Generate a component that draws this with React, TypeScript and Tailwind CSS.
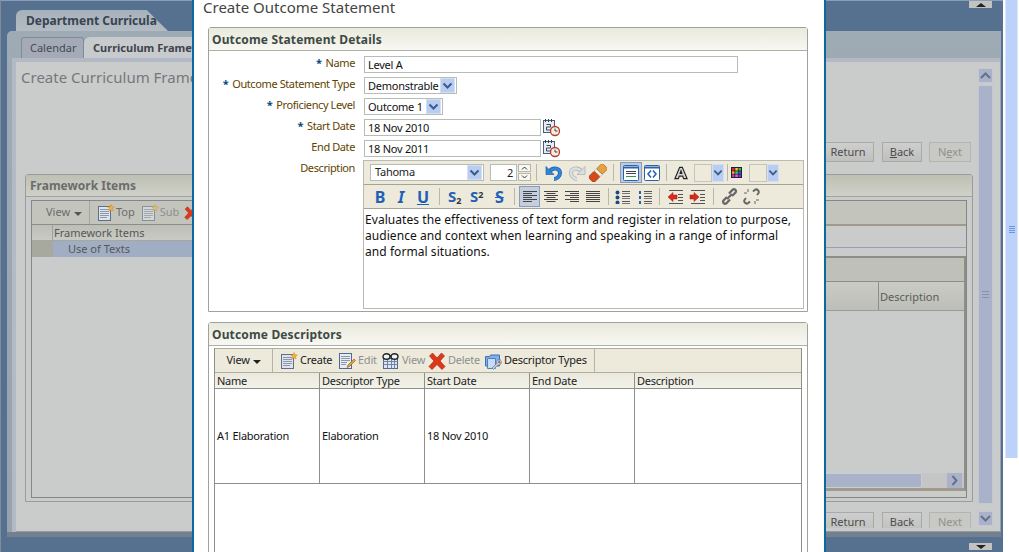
import React from 'react'

const font = "font-['Noto_Sans',sans-serif]"

function PageIcon({ dim = false }: { dim?: boolean }) {
  return (
    <svg width="18" height="18" viewBox="0 0 18 18" className={`shrink-0 ${dim ? 'opacity-60' : ''}`}>
      <rect x="1.500" y="2.500" width="12" height="14" fill="#dfe4ec" stroke="#5d6f8c" />
      <path d="M3 5.500h9M3 7.500h9M3 9.500h9M3 11.500h9M3 13.500h7" stroke="#8a97ad" />
      <path d="M14 0.500l1 2.200 2.400.3-1.800 1.600.5 2.400-2.100-1.200-2.100 1.200.5-2.400-1.800-1.600 2.400-.3z" fill="#f2b33d" stroke="#d0882a" strokeWidth=".5" />
    </svg>
  )
}

function EditIcon() {
  return (
    <svg width="18" height="18" viewBox="0 0 18 18" className="shrink-0">
      <rect x="1.500" y="1.500" width="12" height="15" fill="#e8edf4" stroke="#4f6a93" />
      <path d="M3 4.500h9M3 6.500h9M3 8.500h9M3 10.500h6M3 12.500h5" stroke="#8a97ad" />
      <path d="M16 7l1.500 1.500-6 6-2.500 1 1-2.500z" fill="#e3a03a" stroke="#8a5a22" strokeWidth=".6" />
    </svg>
  )
}

function GlassesIcon() {
  return (
    <svg width="19" height="18" viewBox="0 0 19 18" className="shrink-0">
      <rect x="2.500" y="6.500" width="14" height="10" fill="#dfe6f1" stroke="#516a92" />
      <path d="M2.500 9.500h14M2.500 12.500h14M6.500 6.500v10M10.500 6.500v10M13.500 6.500v10" stroke="#6f86ab" />
      <ellipse cx="5.500" cy="4.500" rx="3.500" ry="2.800" fill="#eef3fa" stroke="#222" strokeWidth="1.400" />
      <ellipse cx="13.500" cy="4.500" rx="3.500" ry="2.800" fill="#eef3fa" stroke="#222" strokeWidth="1.400" />
      <path d="M8.500 4h2" stroke="#222" strokeWidth="1.400" />
    </svg>
  )
}

function XIcon({ size = 18 }: { size?: number }) {
  return (
    <svg width={size} height={size} viewBox="0 0 18 18" className="shrink-0">
      <path d="M1.500 4L4.500 1 9 6l4.500-5 3 3L12 9l5 5.500-3 3L9 12.500l-5 5-3-3L6 9z" fill="#e0361a" stroke="#a12a12" strokeWidth=".7" />
    </svg>
  )
}

function TypesIcon() {
  return (
    <svg width="18" height="18" viewBox="0 0 18 18" className="shrink-0">
      <path d="M1.500 4.500h4l1-1.500h9v11h-14z" fill="#7fb0e8" stroke="#3f6fb0" />
      <path d="M3.500 6.500h8v10h-8z" fill="#c4dcf5" stroke="#4f80bd" />
      <path d="M17 8a3 3 0 0 0-4.500 3.500L8 16l1.500 1.500 4.500-4.500a3 3 0 0 0 3.500-3.500l-2 1.500-1.500-1z" fill="#c5c9cf" stroke="#66707c" strokeWidth=".6" />
    </svg>
  )
}

function CalIcon() {
  return (
    <svg width="18" height="18" viewBox="0 0 18 18">
      <rect x="0.500" y="1.500" width="11" height="12" fill="#e7ebf2" stroke="#4c5c78" />
      <path d="M2.500 0v3M5.500 0v3M8.500 0v3" stroke="#30415f" />
      <path d="M3.500 5.500h4v2.500h-4v3h4.500" fill="none" stroke="#3a4a66" />
      <circle cx="12" cy="12" r="4.500" fill="#f7ece4" stroke="#b33d28" strokeWidth="1.300" />
      <path d="M12 9.500V12h2.500" fill="none" stroke="#444" />
    </svg>
  )
}

function UndoIcon({ redo = false }: { redo?: boolean }) {
  const fill = redo ? '#dcdfe0' : '#2f86d8'
  const edge = redo ? '#a9aeb3' : '#1f5fa8'
  return (
    <svg width="18" height="18" viewBox="0 0 18 18" className={redo ? '-scale-x-100' : ''}>
      <path d="M5 7c3-4 10-3 10 2 0 3-3 6-6 6" fill="none" stroke={edge} strokeWidth="4" />
      <path d="M5 7c3-4 10-3 10 2 0 3-3 6-6 6" fill="none" stroke={fill} strokeWidth="2.600" />
      <path d="M1 2.500v8h8z" fill={fill} stroke={edge} strokeWidth=".7" />
    </svg>
  )
}

function EraserIcon() {
  return (
    <svg width="18" height="18" viewBox="0 0 18 18">
      <g transform="rotate(-45 9 9)">
        <rect x="-1" y="5" width="9" height="8" rx="1.500" fill="#d8491a" stroke="#8a3317" strokeWidth=".7" />
        <rect x="8" y="5" width="3" height="8" fill="#f4f1e8" stroke="#a69a80" strokeWidth=".5" />
        <rect x="11" y="5" width="8" height="8" rx="1.500" fill="#e9a13f" stroke="#9a6a25" strokeWidth=".7" />
      </g>
    </svg>
  )
}

function RichIcon() {
  return (
    <div className="w-[22px] h-[21px] flex items-center justify-center bg-[#bccbe0] border border-[#8b9cb8] shrink-0">
      <svg width="16" height="16" viewBox="0 0 16 16">
        <rect x="0.500" y="0.500" width="15" height="15" rx="1" fill="#fff" stroke="#2a63ad" />
        <path d="M0.500 2.500h15" stroke="#2a63ad" strokeWidth="2" />
        <path d="M3 6.500h10M3 8.500h10" stroke="#345" />
        <path d="M3 11.500h10" stroke="#2c9a4a" />
      </svg>
    </div>
  )
}

function SourceIcon() {
  return (
    <svg width="16" height="16" viewBox="0 0 16 16">
      <rect x="0.500" y="0.500" width="15" height="15" rx="1" fill="#fff" stroke="#2a63ad" />
      <path d="M0.500 2.500h15" stroke="#2a63ad" strokeWidth="2" />
      <path d="M7 5.500L4 9l3 3.500M9 5.500L12 9l-3 3.500" fill="none" stroke="#2a63ad" strokeWidth="1.600" />
    </svg>
  )
}

function Chevron() {
  return (
    <svg width="11" height="8" viewBox="0 0 11 8">
      <path d="M1.500 1.500L5.500 5.500l4-4" fill="none" stroke="#3f5a86" strokeWidth="2" />
    </svg>
  )
}

function DropBtn({ w = 'w-[15px]', h = 'h-[15px]' }: { w?: string; h?: string }) {
  return (
    <span className={`${w} ${h} flex items-center justify-center bg-[#b8cdf2] border border-[#d3dff5] shrink-0`}>
      <Chevron />
    </span>
  )
}

function Sep({ ml = 'ml-[5px]', mr = 'mr-[5px]' }: { ml?: string; mr?: string }) {
  return <span className={`w-px h-[17px] bg-[#b7b7aa] shrink-0 ${ml} ${mr}`} />
}

function AlignIcon({ kind }: { kind: 'left' | 'center' | 'right' | 'full' }) {
  const rows = [0, 1, 2, 3, 4, 5]
  return (
    <svg width="16" height="14" viewBox="0 0 16 14">
      {rows.map((r) => {
        const long = r % 2 === 0
        const w = kind === 'full' || long ? 14 : 9
        const x = kind === 'left' || kind === 'full' ? 1 : kind === 'right' ? 15 - w : 8 - w / 2
        return <rect key={r} x={x} y={1 + r * 2} width={w} height="1" fill="#444" />
      })}
    </svg>
  )
}

function ListIcon({ numbered = false }: { numbered?: boolean }) {
  return (
    <svg width="16" height="14" viewBox="0 0 16 14" className="shrink-0">
      {[1, 6, 11].map((y) => (
        <g key={y}>
          {numbered ? (
            <rect x="2" y={y} width="2" height="3" fill="#2b5ea8" />
          ) : (
            <circle cx="2.500" cy={y + 1.500} r="2" fill="#23487e" />
          )}
          <rect x="7" y={y} width="8" height="1" fill="#555" />
          <rect x="7" y={y + 2} width="8" height="1" fill="#777" />
        </g>
      ))}
    </svg>
  )
}

function IndentIcon({ out = false }: { out?: boolean }) {
  return (
    <svg width="17" height="14" viewBox="0 0 17 14" className="shrink-0">
      <rect x="2" y="0" width="14" height="1" fill="#555" />
      <rect x="2" y="13" width="14" height="1" fill="#555" />
      {[3, 6, 9].map((y) => (
        <rect key={y} x="11" y={y + 1} width="5" height="1" fill="#555" />
      ))}
      <path
        d={out ? 'M1 7l5-4.500V5h4v4H6v2.500z' : 'M10 7L5 2.500V5H1v4h4v2.500z'}
        fill="#e0281a"
        stroke="#8c1f14"
        strokeWidth=".5"
      />
    </svg>
  )
}

function LinkIcon({ broken = false }: { broken?: boolean }) {
  return (
    <svg width="17" height="17" viewBox="0 0 17 17" className="shrink-0">
      {broken ? (
        <g fill="none" stroke="#666" strokeWidth="2">
          <path d="M3 10L1.800 11.500a2.500 2.500 0 0 0 3.500 3.500L7 13.500" />
          <path d="M14 7l1.200-1.500a2.500 2.500 0 0 0-3.500-3.500L10 3.500" />
          <path d="M5 1v3M1 5h3M12 16v-3M16 12h-3" strokeWidth="1" />
        </g>
      ) : (
        <g fill="none" stroke="#666" strokeWidth="2.200">
          <path d="M6 9l-3.500 3.500a2 2 0 0 0 2.800 2.800L9 11.500" />
          <path d="M11 8l3.500-3.500a2 2 0 0 0-2.800-2.800L8 5.500" />
          <path d="M6 11l5-5" />
        </g>
      )}
    </svg>
  )
}

function PageBtn({ label, w, under, dim = false }: { label: string; w: string; under?: number; dim?: boolean }) {
  return (
    <span
      className={`${w} h-[20px] shrink-0 flex items-center justify-center text-[11px] border ${
        dim ? 'border-[#b4b4b2] text-[#8f9190] bg-[#c8c8c4]' : 'border-[#a7aaa9] text-[#4c4c4c] bg-gradient-to-b from-[#cecece] to-[#bfc0be]'
      }`}
    >
      {under === undefined ? (
        label
      ) : (
        <span>
          {label.slice(0, under)}
          <u>{label[under]}</u>
          {label.slice(under + 1)}
        </span>
      )}
    </span>
  )
}

function PageBtns({ keys = true }: { keys?: boolean }) {
  return (
    <div className="flex">
      <PageBtn label="Return" w="w-[52px]" />
      <span className="w-[8px]" />
      <PageBtn label="Back" w="w-[40px]" under={keys ? 0 : undefined} />
      <span className="w-[7px]" />
      <PageBtn label="Next" w="w-[42px]" under={keys ? 1 : undefined} dim />
    </div>
  )
}

function SmallArrowBtn({ up = false }: { up?: boolean }) {
  return (
    <span className="w-[23px] h-[7px] bg-[#c2c3c1] flex items-center justify-center">
      <span className={`border-x-[5px] border-x-transparent ${up ? 'border-b-[4px] border-b-[#222]' : 'border-t-[4px] border-t-[#222]'}`} />
    </span>
  )
}

function BgPage() {
  return (
    <div className="w-[1003px] h-full bg-[#56718f] border-l border-[#7f8d9b] flex flex-col shrink-0">
      <div className="h-[1px] bg-[#8b9fb9]" />
      <div className="h-[30px] relative pt-[9px] pl-[15px]">
        <div className="w-[152px] h-[21px] bg-gradient-to-b from-[#a6b2bb] to-[#b3bcc3] rounded-tl-[6px] [clip-path:polygon(0_0,86%_0,100%_100%,0_100%)] pl-[10px] text-[12px] leading-[22px] font-bold text-[#3a4350] whitespace-nowrap">
          Department Curricula
        </div>
        <span className="absolute right-[11px] top-0">
          <SmallArrowBtn up />
        </span>
      </div>
      <div className="h-[501px] ml-[6px] mr-[2px] flex flex-col rounded-tl-[5px] bg-gradient-to-b from-[#9eabb4] to-[#98a2af]">
        <div className="h-[27px] pl-[14px] pt-[6px] flex shrink-0">
          <div className="w-[63px] h-[21px] bg-[#a4aab6] border border-[#808a9a] border-b-0 rounded-t-[3px] text-[11px] leading-[20px] pl-[8px] text-[#454a55]">
            Calendar
          </div>
          <div className="w-[200px] h-[21px] bg-[#c7cbce] rounded-tl-[6px] pl-[9px] text-[11px] leading-[21px] font-bold text-[#3e434c] whitespace-nowrap">
            Curriculum Framework
          </div>
        </div>
        <div className="flex-1 min-h-0 ml-[5px] mr-[1px] bg-[#cacbcb] border-l-[4px] border-t-[4px] border-[#b4b9c6] flex flex-col">
          <div className="flex flex-1 min-h-0">
            <div className="flex-1 min-w-0 flex flex-col pl-[9px] pr-[5px]">
              <div className="h-[112px] flex justify-between shrink-0">
                <div className="pt-[3px] -ml-[4px] text-[15px] leading-[24px] text-[#75787b] whitespace-nowrap">Create Curriculum Framework</div>
                <div className="pt-[80px] pr-[2px]">
                  <PageBtns />
                </div>
              </div>
              <div className="h-[328px] flex flex-col border border-[#9a9c9b] rounded-t-[3px] shrink-0">
                <div className="h-[22px] bg-gradient-to-b from-[#bfc0b4] to-[#cfd0c8] border-b border-[#a0a2a0] pl-[4px] text-[12px] leading-[21px] font-bold text-[#6a6d6d] shrink-0">
                  Framework Items
                </div>
                <div className="flex-1 min-h-0 mx-[5px] mt-[3px] mb-[3px] border border-[#858785] flex flex-col">
                  <div className="h-[24px] border-b border-[#8b8d86] flex items-center text-[11px] text-[#6a6c6c] bg-[#c3c4bc] shrink-0">
                    <span className="w-[58px] pl-[14px] border-r border-[#a6a79e] h-full flex items-center gap-[4px]">
                      View <span className="border-x-[4px] border-t-[4px] border-x-transparent border-t-[#555] mt-[2px]" />
                    </span>
                    <span className="flex items-center pl-[7px] gap-[1px]"><PageIcon /> Top</span>
                    <span className="flex items-center pl-[6px] gap-[1px] text-[#8d8f8f]"><PageIcon dim /> Sub</span>
                    <span className="pl-[5px]"><XIcon size={14} /></span>
                  </div>
                  <div className="h-[16px] w-[400px] flex text-[11px] leading-[16px] text-[#55585a] bg-gradient-to-b from-[#bdbeb5] to-[#c9cac3] border-b border-[#a6a79e] shrink-0">
                    <span className="w-[21px] border-r border-[#a0a19a]" />
                    <span className="pl-[1px]">Framework Items</span>
                  </div>
                  <div className="h-[16px] w-[400px] flex text-[11px] leading-[16px] text-[#55585a] bg-[#a1adc3] shrink-0">
                    <span className="w-[21px] bg-[#a8a99e]" />
                    <span className="pl-[15px]">Use of Texts</span>
                  </div>
                  <div className="flex-1 min-h-0 flex justify-end">
                    <div className="w-[145px] mt-[-33px] h-[275px] flex flex-col shrink-0">
                      <div className="h-[2px] bg-[#a09a8c] shrink-0" />
                      <div className="h-[22px] border-b border-[#97a0ac] shrink-0" />
                      <div className="h-[235px] mt-[8px] border-2 border-[#8c8e88] border-b-[3px] border-b-[#a09a8c] flex flex-col shrink-0">
                        <div className="h-[24px] bg-[#bfc0b8] border-b border-[#8c8e88] shrink-0" />
                        <div className="h-[29px] flex justify-end bg-gradient-to-b from-[#cacbc4] to-[#bdbeb7] border-b border-[#9a9c98] shrink-0">
                          <div className="w-[86px] border-l border-[#8c8e88] pl-[1px] text-[11px] leading-[29px] text-[#595c5e]">Description</div>
                        </div>
                        <div className="flex-1" />
                        <div className="h-[15px] flex items-center justify-end bg-[#c4c5c4] shrink-0">
                          <div className="w-[100px] h-[15px] bg-[#a9b2c8] border border-[#c8ced8] rounded-r-[2px]" />
                          <div className="w-[25px]" />
                          <div className="w-[15px] h-[15px] bg-[#a9b2c8] flex items-center justify-center">
                            <svg width="7" height="11" viewBox="0 0 7 11"><path d="M1.500 1l4 4.500-4 4.500" fill="none" stroke="#667088" strokeWidth="2" /></svg>
                          </div>
                          <div className="w-[2px]" />
                        </div>
                      </div>
                    </div>
                  </div>
                </div>
              </div>
              <div className="flex-1 min-h-0 flex justify-end items-start pt-[10px] pr-[2px]">
                <div className="h-[16px] overflow-hidden">
                  <PageBtns keys={false} />
                </div>
              </div>
            </div>
            <div className="w-[15px] mr-[7px] flex flex-col pt-[6px] pb-[5px] shrink-0">
              <div className="h-[15px] bg-[#a9b2c8] border border-[#c3c9d4] flex items-center justify-center shrink-0">
                <svg width="11" height="7" viewBox="0 0 11 7"><path d="M1 6l4.500-4.500L10 6" fill="none" stroke="#667088" strokeWidth="2" /></svg>
              </div>
              <div className="flex-1 mt-[2px] mb-[7px] bg-[#a9b2c8] border border-[#c3c9d4] flex items-center justify-center rounded-[2px]">
                <div className="w-[7px] h-[7px] [background:repeating-linear-gradient(#8892a8_0_1px,transparent_1px_3px)]" />
              </div>
              <div className="h-[15px] bg-[#a9b2c8] border border-[#c3c9d4] flex items-center justify-center shrink-0">
                <svg width="11" height="7" viewBox="0 0 11 7"><path d="M1 1l4.500 4.500L10 1" fill="none" stroke="#667088" strokeWidth="2" /></svg>
              </div>
            </div>
          </div>
          <div className="h-[1px] bg-[#96989c] shrink-0" />
        </div>
      </div>
      <div className="h-[5px] ml-[6px] mr-[2px] bg-[#72808f] shrink-0" />
      <div className="flex-1 flex justify-end items-start pr-[11px] pt-[6px]">
        <SmallArrowBtn />
      </div>
    </div>
  )
}

function FormRow({ label, req = false, children }: { label: string; req?: boolean; children: React.ReactNode }) {
  return (
    <div className="flex h-[21px] items-center">
      <div className="w-[146px] text-right text-[11px] leading-[14px] tracking-[-0.4px] text-[#5f4300] whitespace-nowrap -mt-[4px]">
        {req && <span className="text-[#00487e] font-bold mr-[4px]">*</span>}
        {label}
      </div>
      <div className="ml-[9px] flex items-center">{children}</div>
    </div>
  )
}

function TextInput({ value, w }: { value: string; w: string }) {
  return (
    <div className={`${w} h-[17px] border border-[#b6bdb6] bg-white pl-[3px] text-[11px] leading-[16px] text-[#111] whitespace-nowrap`}>
      {value}
    </div>
  )
}

function SelectBox({ value, w }: { value: string; w: string }) {
  return (
    <div className={`${w} h-[17px] border border-[#b6bdb6] bg-white pl-[3px] pr-[1px] flex items-center justify-between text-[11px] text-[#111]`}>
      <span className="whitespace-nowrap mt-[1px]">{value}</span>
      <DropBtn />
    </div>
  )
}

function Editor() {
  return (
    <div className="w-[441px] h-[149px] flex flex-col border border-[#b9bab0] bg-white ml-[-1px]">
      <div className="h-[24px] bg-[#edeadb] border-b border-[#a3a396] flex items-center pl-[6px] shrink-0">
        <div className="w-[114px] h-[17px] border border-[#b6bdb6] bg-white pl-[4px] pr-[1px] flex items-center justify-between text-[11px] text-[#222] shrink-0">
          Tahoma
          <DropBtn />
        </div>
        <div className="ml-[6px] w-[27px] h-[17px] border border-[#b6bdb6] bg-white pr-[3px] text-right text-[11px] leading-[16px] text-[#222] shrink-0">2</div>
        <div className="ml-[1px] w-[13px] h-[17px] flex flex-col gap-px shrink-0">
          <span className="h-[8px] bg-[#f8f8f2] border border-[#b6b6aa] flex items-center justify-center"><svg width="7" height="4" viewBox="0 0 7 4"><path d="M1 3.500l2.500-2.500L6 3.500" fill="none" stroke="#333" /></svg></span>
          <span className="h-[8px] bg-[#f8f8f2] border border-[#b6b6aa] flex items-center justify-center"><svg width="7" height="4" viewBox="0 0 7 4"><path d="M1 .5l2.500 2.500L6 .5" fill="none" stroke="#333" /></svg></span>
        </div>
        <Sep />
        <span className="ml-[3px]"><UndoIcon /></span>
        <span className="w-[5px]" />
        <UndoIcon redo />
        <span className="w-[3px]" />
        <EraserIcon />
        <Sep ml="ml-[6px]" mr="mr-[6px]" />
        <RichIcon />
        <span className="w-[2px]" />
        <SourceIcon />
        <Sep ml="ml-[6px]" mr="mr-[7px]" />
        <svg width="14" height="14" viewBox="0 0 16 15" className="shrink-0"><path d="M1 14L6.500 1h3L15 14h-4l-1-3H6l-1 3zM7 8h2L8 5z" fill="#d8d8d8" stroke="#222" strokeWidth="1.300" /></svg>
        <span className="ml-[6px] w-[18px] h-[18px] border border-[#c4c4b8] bg-[#edeadb] shrink-0" />
        <DropBtn w="w-[12px]" h="h-[18px]" />
        <Sep ml="ml-[3px]" mr="mr-[3px]" />
        <svg width="11" height="11" viewBox="0 0 11 11" className="shrink-0">
          <rect width="11" height="11" fill="#222" />
          <rect x="1" y="1" width="2.500" height="2.500" fill="#e23" /><rect x="4.300" y="1" width="2.500" height="2.500" fill="#fc3" /><rect x="7.500" y="1" width="2.500" height="2.500" fill="#3b4" />
          <rect x="1" y="4.300" width="2.500" height="2.500" fill="#fa2" /><rect x="4.300" y="4.300" width="2.500" height="2.500" fill="#3c8" /><rect x="7.500" y="4.300" width="2.500" height="2.500" fill="#35d" />
          <rect x="1" y="7.500" width="2.500" height="2.500" fill="#c3c" /><rect x="4.300" y="7.500" width="2.500" height="2.500" fill="#e5e" /><rect x="7.500" y="7.500" width="2.500" height="2.500" fill="#73d" />
        </svg>
        <span className="ml-[7px] w-[18px] h-[18px] border border-[#c4c4b8] bg-[#edeadb] shrink-0" />
        <DropBtn w="w-[12px]" h="h-[18px]" />
      </div>
      <div className="h-[24px] bg-[#edeadb] border-b border-[#a3a396] flex items-center pl-[8px] tracking-normal shrink-0">
        <span className="w-[16px] text-center text-[16px] font-bold text-[#1f60b8] shrink-0">B</span>
        <span className="w-[5px]" />
        <span className="w-[16px] text-center text-[16px] font-bold italic text-[#1f60b8] shrink-0">I</span>
        <span className="w-[6px]" />
        <span className="w-[16px] text-center text-[16px] font-bold underline text-[#1f60b8] shrink-0">U</span>
        <Sep ml="ml-[8px]" mr="mr-[8px]" />
        <span className="w-[20px] text-[15px] font-bold text-[#1f60b8] leading-none shrink-0">S<sub className="text-[9px] text-[#333]">2</sub></span>
        <span className="w-[2px]" />
        <span className="w-[20px] text-[15px] font-bold text-[#1f60b8] leading-none shrink-0">S<sup className="text-[9px] text-[#333]">2</sup></span>
        <span className="w-[5px]" />
        <span className="w-[14px] text-[16px] font-bold text-[#1f60b8] line-through leading-none shrink-0">S</span>
        <Sep ml="ml-[5px]" mr="mr-[4px]" />
        <span className="w-[21px] h-[21px] flex items-center justify-center bg-[#c3cfe0] border border-[#8b9cb8] shrink-0"><AlignIcon kind="left" /></span>
        <span className="w-[21px] flex justify-center shrink-0"><AlignIcon kind="center" /></span>
        <span className="w-[21px] flex justify-center shrink-0"><AlignIcon kind="right" /></span>
        <span className="w-[21px] flex justify-center shrink-0"><AlignIcon kind="full" /></span>
        <Sep ml="ml-[5px]" mr="mr-[6px]" />
        <ListIcon />
        <span className="w-[6px]" />
        <ListIcon numbered />
        <Sep ml="ml-[6px]" mr="mr-[7px]" />
        <IndentIcon out />
        <span className="w-[5px]" />
        <IndentIcon />
        <Sep ml="ml-[7px]" mr="mr-[7px]" />
        <LinkIcon />
        <span className="w-[5px]" />
        <LinkIcon broken />
      </div>
      <div className="flex-1 pl-[1px] pt-[3px] text-[12px] leading-[16px] tracking-[0.06px] text-[#111] whitespace-nowrap">
        Evaluates the effectiveness of text form and register in relation to purpose,
        <br />
        audience and context when learning and speaking in a range of informal
        <br />
        and formal situations.
      </div>
    </div>
  )
}

function TbAction({ icon, label, w, dim = false }: { icon: React.ReactNode; label: string; w: string; dim?: boolean }) {
  return (
    <span className={`${w} flex items-center gap-[2px] text-[11px] whitespace-nowrap shrink-0 ${dim ? 'text-[#8e9090]' : 'text-[#222]'}`}>
      {icon}
      {label}
    </span>
  )
}

function PanelHead({ title }: { title: string }) {
  return (
    <div className="h-[23px] bg-gradient-to-b from-[#e9e9dc] to-[#f8f8f3] border-b border-[#aeb0a8] pl-[3px] text-[12px] leading-[23px] tracking-[0.15px] font-bold text-[#3e4a44]">
      {title}
    </div>
  )
}

const cols = ['Name', 'Descriptor Type', 'Start Date', 'End Date', 'Description']
const row = ['A1 Elaboration', 'Elaboration', '18 Nov 2010', '', '']

function Modal() {
  return (
    <div className="absolute left-[192px] top-0 w-[634px] h-[552px] bg-white border-x-2 border-[#0a6aa0] pl-[14px] pr-[16px] overflow-hidden tracking-[-0.25px]">
      <div className="h-[27px] -ml-[5px] -mt-[1px] pb-[1px] box-content text-[15px] leading-[16px] tracking-normal text-[#444] whitespace-nowrap">Create Outcome Statement</div>
      <div className="h-[285px] border border-[#9fa19c] rounded-t-[3px]">
        <PanelHead title="Outcome Statement Details" />
        <div className="pt-[3px]">
          <FormRow label="Name" req><TextInput value="Level A" w="w-[374px]" /></FormRow>
          <FormRow label="Outcome Statement Type" req><SelectBox value="Demonstrable" w="w-[93px]" /></FormRow>
          <FormRow label="Proficiency Level" req><SelectBox value="Outcome 1" w="w-[79px]" /></FormRow>
          <FormRow label="Start Date" req>
            <TextInput value="18 Nov 2010" w="w-[177px]" />
            <span className="ml-[2px]"><CalIcon /></span>
          </FormRow>
          <FormRow label="End Date">
            <TextInput value="18 Nov 2011" w="w-[177px]" />
            <span className="ml-[2px]"><CalIcon /></span>
          </FormRow>
          <div className="flex pt-[2px]">
            <div className="w-[146px] text-right text-[11px] leading-[14px] tracking-[-0.4px] text-[#5f4300]">Description</div>
            <div className="ml-[9px] -mt-[1px]"><Editor /></div>
          </div>
        </div>
      </div>
      <div className="mt-[10px] h-[240px] border border-[#9fa19c] rounded-t-[3px]">
        <PanelHead title="Outcome Descriptors" />
        <div className="ml-[5px] mr-[5px] mt-[2px] border-x border-[#8e8f88] h-[220px] flex flex-col">
          <div className="h-[25px] bg-[#edeadb] border-y border-[#aeae9f] flex items-center shrink-0">
            <span className="w-[58px] h-full flex items-center justify-center gap-[3px] text-[11px] text-[#222] border-r border-[#b4b4a6]">
              View <span className="border-x-[4px] border-t-[4px] border-x-transparent border-t-[#222] mt-[2px]" />
            </span>
            <span className="flex items-center pl-[7px] w-[322px] h-full border-r border-[#b4b4a6]">
              <TbAction icon={<PageIcon />} label="Create" w="w-[58px]" />
              <TbAction icon={<EditIcon />} label="Edit" w="w-[43px]" dim />
              <TbAction icon={<GlassesIcon />} label="View" w="w-[47px]" dim />
              <TbAction icon={<XIcon />} label="Delete" w="w-[56px]" dim />
              <TbAction icon={<TypesIcon />} label="Descriptor Types" w="w-[105px]" />
            </span>
          </div>
          <div className="grid grid-cols-[105px_105px_105px_105px_1fr] h-[16px] bg-gradient-to-b from-[#ebe9dc] to-[#f3f2ea] border-b border-[#8e8f88] text-[11px] leading-[15px] text-[#222] shrink-0">
            {cols.map((c) => (
              <div key={c} className="pl-[2px] border-r border-[#8e8f88] last:border-r-0">{c}</div>
            ))}
          </div>
          <div className="grid grid-cols-[105px_105px_105px_105px_1fr] h-[95px] border-b border-[#8e8f88] text-[11px] text-[#111] shrink-0">
            {row.map((c, i) => (
              <div key={i} className="pl-[2px] flex items-center border-r border-[#8e8f88] last:border-r-0">{c}</div>
            ))}
          </div>
        </div>
      </div>
    </div>
  )
}

export default function App() {
  return (
    <div className={`relative w-[1019px] h-[552px] overflow-hidden bg-white flex ${font}`}>
      <BgPage />
      <div className="w-[2px] shrink-0" />
      <div className="w-[13px] h-[458px] bg-[#bcd2fb] border-x border-[#dbe6fd] flex items-center justify-center shrink-0">
        <div className="w-[6px] h-[7px] [background:repeating-linear-gradient(#6f94e0_0_1px,transparent_1px_2px)]" />
      </div>
      <Modal />
    </div>
  )
}
